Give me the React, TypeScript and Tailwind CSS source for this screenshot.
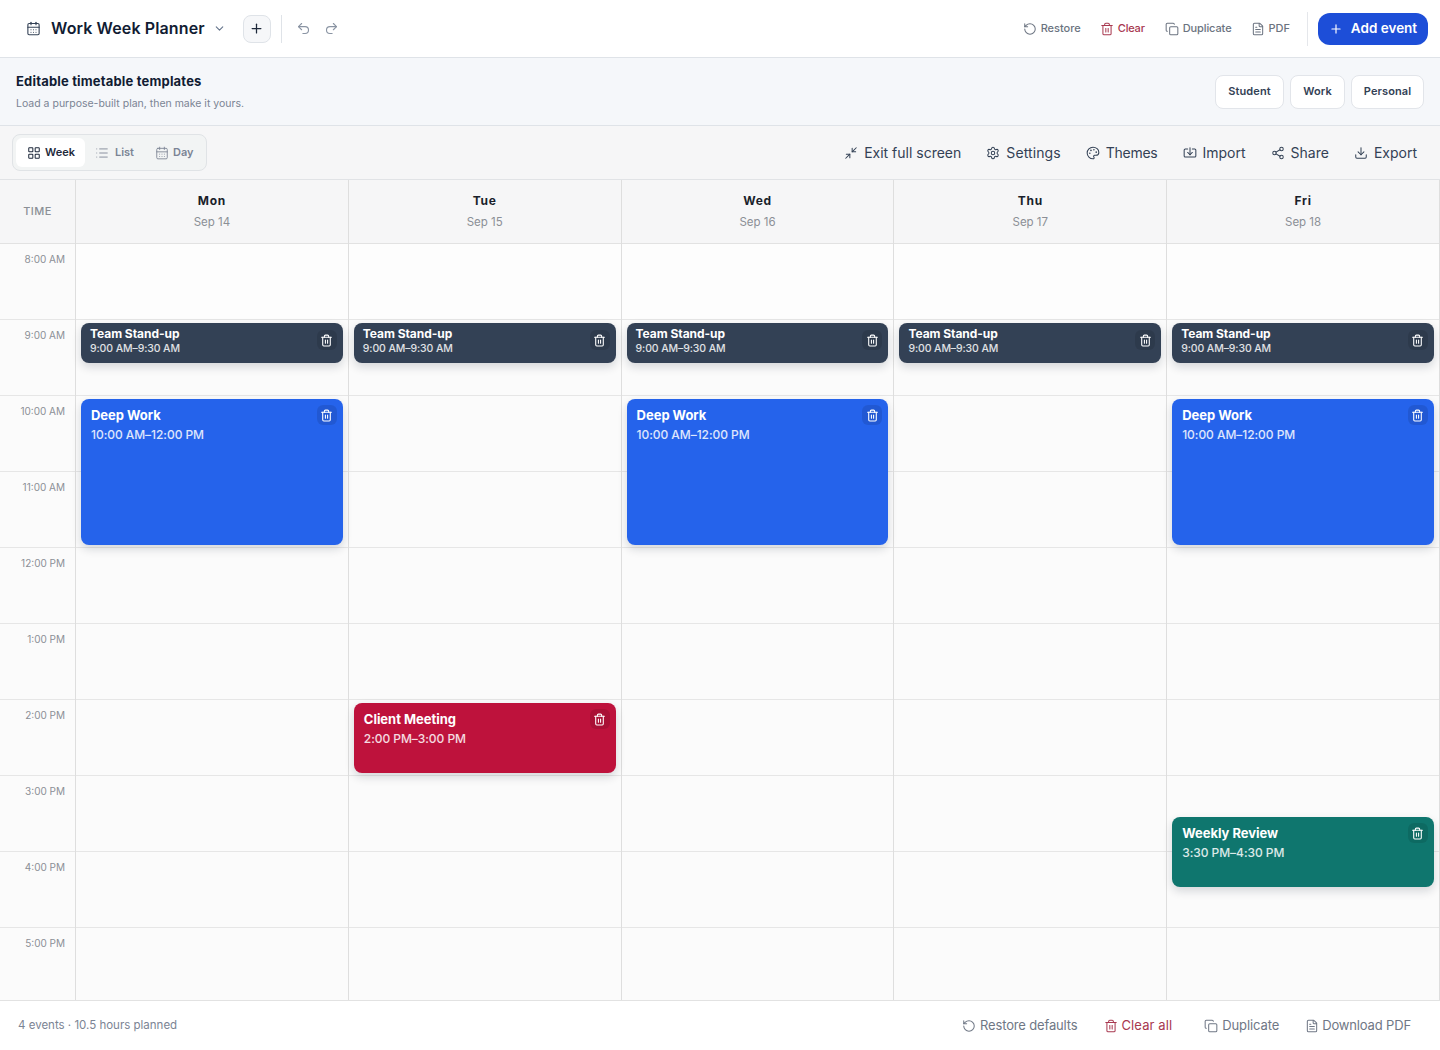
import {
  CalendarDays, ChevronDown, Plus, Undo2, Redo2, RotateCcw, Trash2, Copy, FileText,
  LayoutGrid, List, Minimize2, Settings, Palette, Share2, Download, Import,
} from "lucide-react";

const hours = ["8:00 AM", "9:00 AM", "10:00 AM", "11:00 AM", "12:00 PM", "1:00 PM", "2:00 PM", "3:00 PM", "4:00 PM", "5:00 PM"];
const HOUR = 76;

type Ev = { title: string; time: string; start: number; end: number; color: string; compact?: boolean };

const standup: Ev = { title: "Team Stand-up", time: "9:00 AM–9:30 AM", start: 1, end: 1.5, color: "bg-[#334155]", compact: true };
const deep: Ev = { title: "Deep Work", time: "10:00 AM–12:00 PM", start: 2, end: 4, color: "bg-[#2563eb]" };

const days: { name: string; date: string; events: Ev[] }[] = [
  { name: "Mon", date: "Sep 14", events: [standup, deep] },
  { name: "Tue", date: "Sep 15", events: [standup, { title: "Client Meeting", time: "2:00 PM–3:00 PM", start: 6, end: 7, color: "bg-[#be123c]" }] },
  { name: "Wed", date: "Sep 16", events: [standup, deep] },
  { name: "Thu", date: "Sep 17", events: [standup] },
  { name: "Fri", date: "Sep 18", events: [standup, deep, { title: "Weekly Review", time: "3:30 PM–4:30 PM", start: 7.5, end: 8.5, color: "bg-[#0f766e]" }] },
];

function EventCard({ ev }: { ev: Ev }) {
  const height = ev.compact ? 40 : (ev.end - ev.start) * HOUR - 6;
  return (
    <div
      className={`absolute left-[5px] right-[5px] rounded-lg text-white shadow-[0_4px_10px_rgba(15,23,42,0.16)] ${ev.color} ${ev.compact ? "px-[9px] pt-[3px]" : "px-[10px] pt-[7px]"}`}
      style={{ top: ev.start * HOUR + 3, height }}
    >
      <div className={`font-bold ${ev.compact ? "text-[12px] leading-[16px] tracking-[-0.05px]" : "text-[13px] leading-[18px] tracking-[-0.03px]"}`}>{ev.title}</div>
      <div className={`font-medium text-white/85 ${ev.compact ? "text-[10.5px] leading-[14px] tracking-[-0.1px]" : "mt-[3px] text-[12px] leading-[16px] tracking-[-0.05px]"}`}>{ev.time}</div>
      <button className={`absolute right-[6px] flex h-[20px] w-[20px] items-center justify-center rounded-md bg-black/10 ${ev.compact ? "top-[7px]" : "top-[6px]"}`}>
        <Trash2 className="h-[13px] w-[13px]" strokeWidth={2} />
      </button>
    </div>
  );
}

export default function App() {
  return (
    <div className="flex h-[1050px] w-[1440px] flex-col overflow-hidden bg-white font-['Inter',sans-serif] text-[#0f172a]">
      {/* top bar */}
      <header className="flex h-[58px] shrink-0 items-center justify-between border-b border-[#dfe3e8] bg-white pl-[26px] pr-[12px]">
        <div className="flex items-center">
          <CalendarDays className="h-[15px] w-[15px] text-[#334155]" strokeWidth={1.75} />
          <span className="ml-[10px] pb-[2px] text-[16px] font-semibold tracking-[0.12px] text-[#111c33]">Work Week Planner</span>
          <ChevronDown className="ml-[8px] h-[13px] w-[13px] text-[#64748b]" />
          <button className="ml-[17px] flex h-[28px] w-[28px] items-center justify-center rounded-lg border border-[#dfe3e8] bg-[#f6f7f9] text-[#1e293b]">
            <Plus className="h-[15px] w-[15px]" strokeWidth={2} />
          </button>
          <div className="ml-[10px] h-[28px] w-px bg-[#dfe3e8]" />
          <Undo2 className="ml-[14px] h-[15px] w-[15px] text-[#8a94a3]" strokeWidth={1.75} />
          <Redo2 className="ml-[13px] h-[15px] w-[15px] text-[#8a94a3]" strokeWidth={1.75} />
        </div>
        <div className="flex items-center text-[11px] font-medium text-[#6b7380]">
          <span className="flex items-center gap-[4px]"><RotateCcw className="h-[14px] w-[14px]" strokeWidth={1.75} />Restore</span>
          <span className="ml-[19px] flex items-center gap-[4px] tracking-[-0.2px] text-[#a8384f]"><Trash2 className="h-[14px] w-[14px]" strokeWidth={1.75} />Clear</span>
          <span className="ml-[20px] flex items-center gap-[4px] tracking-[-0.1px]"><Copy className="h-[14px] w-[14px]" strokeWidth={1.75} />Duplicate</span>
          <span className="ml-[19px] flex items-center gap-[4px]"><FileText className="h-[14px] w-[14px]" strokeWidth={1.75} />PDF</span>
          <div className="ml-[17px] h-[34px] w-px bg-[#e5e7eb]" />
          <button className="ml-[10px] flex h-[32px] w-[110px] items-center justify-center gap-[8px] rounded-xl bg-[#1d4ed8] text-[13.5px] font-semibold text-white">
            <Plus className="h-[14px] w-[14px]" strokeWidth={2} />Add event
          </button>
        </div>
      </header>

      {/* templates */}
      <section className="flex h-[68px] shrink-0 items-center justify-between border-b border-[#dfe3e8] bg-[#f5f7fa] pl-[16px] pr-[16px]">
        <div>
          <div className="mb-[1px] text-[13px] font-bold leading-[18px] tracking-[0.18px] text-[#111c33]">Editable timetable templates</div>
          <div className="mt-[6px] text-[10.5px] leading-[16px] text-[#7b8494]">Load a purpose-built plan, then make it yours.</div>
        </div>
        <div className="flex gap-[6px] text-[11px] font-semibold tracking-[0.1px] text-[#334155]">
          <button className="h-[34px] w-[69px] rounded-lg border border-[#e2e5ea] bg-white">Student</button>
          <button className="h-[34px] w-[55px] rounded-lg border border-[#e2e5ea] bg-white">Work</button>
          <button className="h-[34px] w-[73px] rounded-lg border border-[#e2e5ea] bg-white">Personal</button>
        </div>
      </section>

      {/* view switch + tools */}
      <section className="flex h-[54px] shrink-0 items-center justify-between border-b border-[#e1e3e6] bg-[#f6f6f7] pl-[12px] pr-[23px]">
        <div className="flex h-[37px] items-center rounded-lg border border-[#e0e3e6] bg-[#f2f4f4] px-[3px] text-[11px] font-semibold text-[#7b8494]">
          <span className="flex h-[29px] items-center gap-[4px] rounded-md bg-white pl-[11px] pr-[10px] text-[#1e293b]"><LayoutGrid className="h-[14px] w-[14px]" strokeWidth={1.75} />Week</span>
          <span className="ml-[10px] flex items-center gap-[6px]"><List className="h-[14px] w-[14px]" strokeWidth={1.5} />List</span>
          <span className="ml-[21px] flex items-center gap-[4px] pr-[9px]"><CalendarDays className="h-[14px] w-[14px]" strokeWidth={1.5} />Day</span>
        </div>
        <div className="flex items-center text-[14px] text-[#334155]">
          <span className="flex items-center gap-[6px]"><Minimize2 className="h-[14px] w-[14px]" strokeWidth={1.75} />Exit full screen</span>
          <span className="ml-[25px] flex items-center gap-[6px] tracking-[0.1px]"><Settings className="h-[14px] w-[14px]" strokeWidth={1.75} />Settings</span>
          <span className="ml-[25px] flex items-center gap-[6px] tracking-[-0.25px]"><Palette className="h-[14px] w-[14px]" strokeWidth={1.75} />Themes</span>
          <span className="ml-[25px] flex items-center gap-[6px]"><Import className="h-[14px] w-[14px]" strokeWidth={1.75} />Import</span>
          <span className="ml-[25px] flex items-center gap-[6px]"><Share2 className="h-[14px] w-[14px]" strokeWidth={1.75} />Share</span>
          <span className="ml-[25px] flex items-center gap-[6px]"><Download className="h-[14px] w-[14px]" strokeWidth={1.75} />Export</span>
        </div>
      </section>

      {/* timetable */}
      <div className="grid min-h-0 flex-1 grid-cols-[76px_repeat(5,1fr)] overflow-hidden bg-[#fbfbfb]">
        <div className="border-r border-[#dedede]">
          <div className="flex h-[64px] items-center justify-center border-b border-[#e2e2e2] bg-[#f6f6f7] text-[11px] font-medium tracking-[0.04em] text-[#8b8f96]">TIME</div>
          {hours.map((h) => (
            <div key={h} className="h-[76px] border-b border-[#e6e6e6] pr-[10px] pt-[8px] text-right text-[10px] leading-[14px] text-[#8b8f96]">{h}</div>
          ))}
        </div>
        {days.map((d) => (
          <div key={d.name} className="border-r border-[#dedede]">
            <div className="flex h-[64px] flex-col items-center justify-center border-b border-[#e2e2e2] bg-[#f6f6f7]">
              <div className="text-[12px] font-bold leading-[16px] tracking-[0.06em] text-[#1a1f2b]">{d.name}</div>
              <div className="mt-[5px] text-[11.5px] leading-[16px] text-[#8b8f96]">{d.date}</div>
            </div>
            <div className="relative">
              {hours.map((h, i) => (
                <div key={h} className={`h-[76px] border-b border-[#e6e6e6] ${i === 0 ? "bg-[#fdfdfd]" : ""}`} />
              ))}
              {d.events.map((ev) => <EventCard key={ev.title} ev={ev} />)}
            </div>
          </div>
        ))}
      </div>

      {/* footer */}
      <footer className="flex h-[50px] shrink-0 items-center justify-between border-t border-[#e2e2e2] bg-white pl-[18px] pr-[29px] text-[11.5px] text-[#7b8494]">
        <span>4 events · 10.5 hours planned</span>
        <div className="flex items-center text-[13px] text-[#6f7785]">
          <span className="flex items-center gap-[4px] tracking-[-0.15px]"><RotateCcw className="h-[14px] w-[14px]" strokeWidth={1.75} />Restore defaults</span>
          <span className="ml-[26px] flex items-center gap-[4px] tracking-[0.1px] text-[#a8384f]"><Trash2 className="h-[14px] w-[14px]" strokeWidth={1.75} />Clear all</span>
          <span className="ml-[32px] flex items-center gap-[4px] tracking-[-0.1px]"><Copy className="h-[14px] w-[14px]" strokeWidth={1.75} />Duplicate</span>
          <span className="ml-[26px] flex items-center gap-[3px] tracking-[-0.15px]"><FileText className="h-[14px] w-[14px]" strokeWidth={1.75} />Download PDF</span>
        </div>
      </footer>
    </div>
  );
}
